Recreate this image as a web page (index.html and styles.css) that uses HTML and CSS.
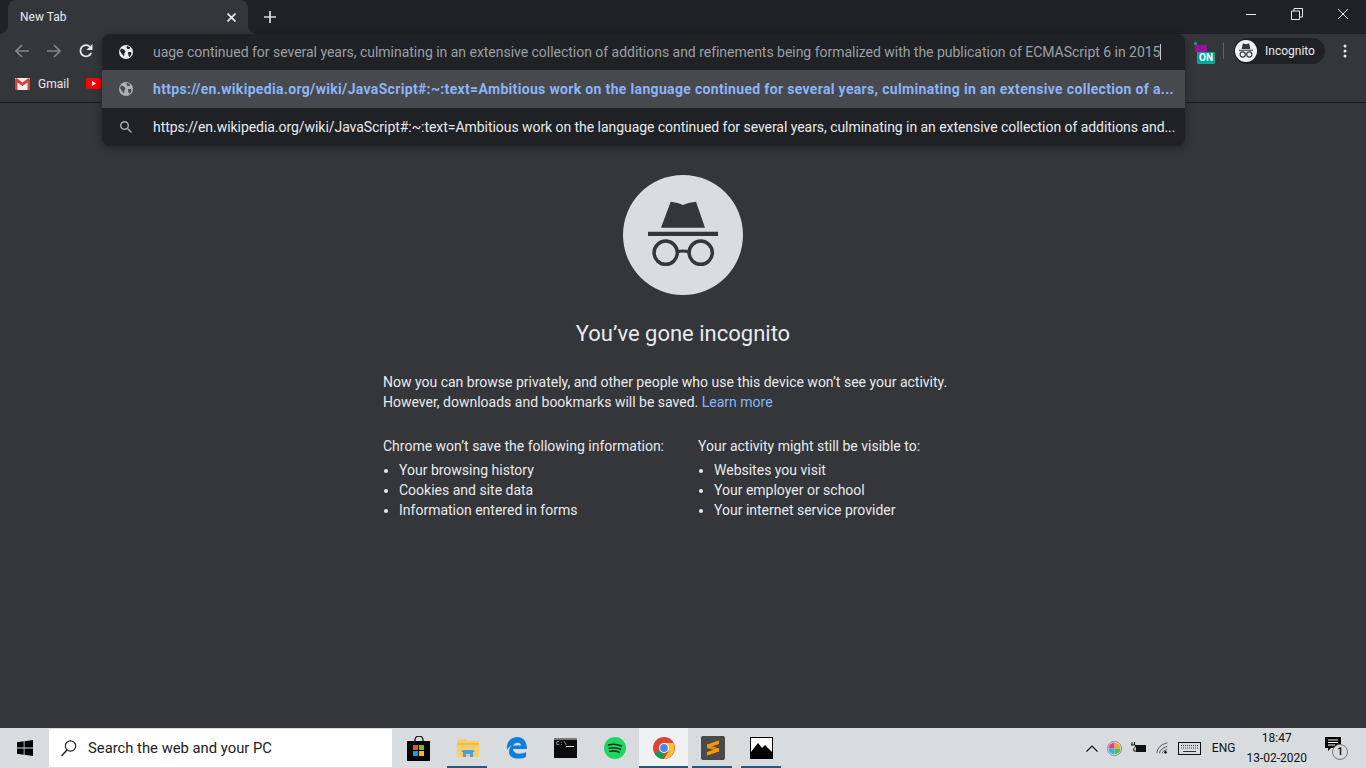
FILE: index.html
```html
<!DOCTYPE html>
<html lang="en">
<head>
  <meta charset="UTF-8" />
  <title>New Tab</title>
  <link rel="stylesheet" href="styles.css">
</head>
<body>
<div class="window">

  <div class="tabstrip">
    <div class="tab">
      <span class="tab-title">New Tab</span>
      <svg class="tab-close" width="9" height="9" viewBox="0 0 9 9"><path d="M.5.5l8 8M8.500.5l-8 8" stroke="#e8eaed" stroke-width="1.700"/></svg>
    </div>
    <svg class="new-tab" width="14" height="14" viewBox="0 0 14 14"><path d="M7 1v12M1 7h12" stroke="#dadce0" stroke-width="1.700"/></svg>
    <div class="win-controls">
      <svg width="12" height="12" viewBox="0 0 12 12"><path d="M1 6.500h10" stroke="#e8eaed"/></svg>
      <svg width="12" height="12" viewBox="0 0 12 12"><path d="M.5 3h8v8.500h-8zM3 3V.5h8.500V9H8.500" fill="none" stroke="#e8eaed"/></svg>
      <svg width="12" height="12" viewBox="0 0 12 12"><path d="M1 1l10 10M11 1L1 11" stroke="#e8eaed"/></svg>
    </div>
  </div>

  <div class="toolbar">
    <div class="nav-buttons">
      <svg width="16" height="16" viewBox="0 0 16 16"><path d="M15 8H2M8 2L2 8l6 6" fill="none" stroke="#80868b" stroke-width="1.700"/></svg>
      <svg width="16" height="16" viewBox="0 0 16 16"><path d="M1 8h13M8 2l6 6-6 6" fill="none" stroke="#80868b" stroke-width="1.700"/></svg>
      <svg width="16" height="16" viewBox="0 0 16 16"><path d="M13.200 9.800A5.600 5.600 0 1 1 12 3.800" fill="none" stroke="#e8eaed" stroke-width="1.800"/><path d="M14.500 1v6h-6z" fill="#e8eaed"/></svg>
    </div>
    <div class="toolbar-right">
      <div class="ext-on">
        <span class="ext-dot"></span>
        <span class="ext-flag"></span>
        <span class="ext-badge">ON</span>
      </div>
      <span class="toolbar-sep"></span>
      <div class="profile-pill">
        <span class="profile-avatar">
          <svg width="20" height="20" viewBox="0 0 20 20"><path d="M6.800 2.500l1.500.3 1.700.4 1.700-.4 1.500-.3L14.300 8H5.700zM3 8.800h14v1H3z" fill="#35363a"/><circle cx="6.700" cy="13.500" r="2.600" fill="none" stroke="#35363a" stroke-width="1.100"/><circle cx="13.300" cy="13.500" r="2.600" fill="none" stroke="#35363a" stroke-width="1.100"/><path d="M9.300 13.200h1.400" stroke="#35363a"/></svg>
        </span>
        <span class="profile-name">Incognito</span>
      </div>
      <svg class="menu-dots" width="4" height="14" viewBox="0 0 4 14"><circle cx="2" cy="2" r="1.500" fill="#e8eaed"/><circle cx="2" cy="7" r="1.500" fill="#e8eaed"/><circle cx="2" cy="12" r="1.500" fill="#e8eaed"/></svg>
    </div>
  </div>

  <div class="bookmarks">
    <div class="bookmark">
      <svg width="15" height="12" viewBox="0 0 15 12"><rect width="15" height="12" rx="1" fill="#f1f1f1"/><path d="M0 1.500V12h2.500V4.500L7.500 8l5-3.500V12H15V1.500L13.500 0 7.500 4.500 1.500 0z" fill="#d9423a"/></svg>
      <span>Gmail</span>
    </div>
    <svg class="yt-icon" width="15" height="11" viewBox="0 0 15 11"><rect width="15" height="11" rx="2.500" fill="#f00"/><path d="M6 3l4 2.500L6 8z" fill="#fff"/></svg>
  </div>

  <div class="omnibox">
    <div class="omni-row first">
      <svg class="omni-icon" width="14" height="14" viewBox="0 0 14 14"><circle cx="7" cy="7" r="7" fill="#e8eaed"/><path d="M2 3.500l3 1 1.500 2-1 1.500L5 11.500 3 9 1 6zM8 1l3 1-.5 2H8.500L7.500 2.500zM9 7h3l.5 2-2 3-1-1.500z" fill="#202124"/></svg>
      <span class="omni-input">uage continued for several years, culminating in an extensive collection of additions and refinements being formalized with the publication of ECMAScript 6 in 2015</span>
      <span class="caret"></span>
    </div>
    <div class="omni-row selected">
      <svg class="omni-icon" width="14" height="14" viewBox="0 0 14 14"><circle cx="7" cy="7" r="7" fill="#aeb0b3"/><path d="M2 3.500l3 1 1.500 2-1 1.500L5 11.500 3 9 1 6zM8 1l3 1-.5 2H8.500L7.500 2.500zM9 7h3l.5 2-2 3-1-1.500z" fill="#48494c"/></svg>
      <span class="omni-link">https://en.wikipedia.org/wiki/JavaScript#:~:text=Ambitious work on the language continued for several years, culminating in an extensive collection of a...</span>
    </div>
    <div class="omni-row">
      <svg class="omni-icon" width="14" height="14" viewBox="0 0 14 14"><circle cx="5.500" cy="5.500" r="3.800" fill="none" stroke="#aeb0b3" stroke-width="1.400"/><path d="M8.500 8.500l4 4" stroke="#aeb0b3" stroke-width="1.500"/></svg>
      <span class="omni-text">https://en.wikipedia.org/wiki/JavaScript#:~:text=Ambitious work on the language continued for several years, culminating in an extensive collection of additions and...</span>
    </div>
  </div>

  <main class="ntp">
    <div class="ntp-circle">
      <svg width="120" height="120" viewBox="0 0 120 120"><path d="M47.700 26.700l7 1.300 5.300 2 5.300-2 7.700-1.300L82 52.700H38zM25 56.700h70V61H25z" fill="#35363a"/><circle cx="42.700" cy="77.700" r="11.600" fill="none" stroke="#35363a" stroke-width="3.500"/><circle cx="77.700" cy="77.700" r="11.600" fill="none" stroke="#35363a" stroke-width="3.500"/><path d="M54 77q6-2 12 0" fill="none" stroke="#35363a" stroke-width="3"/></svg>
    </div>
    <h1 class="ntp-title">You’ve gone incognito</h1>
    <div class="ntp-content">
      <p class="ntp-intro">Now you can browse privately, and other people who use this device won’t see your activity.<br>However, downloads and bookmarks will be saved. <a href="#">Learn more</a></p>
      <div class="ntp-columns">
        <div class="ntp-col">
          <h2>Chrome won’t save the following information:</h2>
          <ul>
            <li>Your browsing history</li>
            <li>Cookies and site data</li>
            <li>Information entered in forms</li>
          </ul>
        </div>
        <div class="ntp-col">
          <h2>Your activity might still be visible to:</h2>
          <ul>
            <li>Websites you visit</li>
            <li>Your employer or school</li>
            <li>Your internet service provider</li>
          </ul>
        </div>
      </div>
    </div>
  </main>

  <footer class="taskbar">
    <div class="start">
      <svg width="16" height="16" viewBox="0 0 16 16"><path d="M0 2.300l6.700-1v6.300H0zM7.500 1.200L16 0v7.600H7.500zM0 8.400h6.700v6.300l-6.700-1zM7.500 8.400H16V16l-8.500-1.200z" fill="#000"/></svg>
    </div>
    <div class="task-search">
      <svg width="18" height="18" viewBox="0 0 18 18"><circle cx="10.500" cy="7" r="5.200" fill="none" stroke="#222" stroke-width="1.200"/><path d="M7 11L1.500 17" stroke="#222" stroke-width="1.400"/></svg>
      <span>Search the web and your PC</span>
    </div>
    <div class="task-apps">
      <div class="task-app">
        <svg width="24" height="25" viewBox="0 0 24 25"><path d="M8 6V4a4 4 0 0 1 8 0v2" fill="none" stroke="#111" stroke-width="1.300"/><rect y="5" width="23" height="20" fill="#000"/><rect x="6" y="9" width="5" height="5" fill="#f25022"/><rect x="12" y="9" width="5" height="5" fill="#7fba00"/><rect x="6" y="15" width="5" height="5" fill="#00a4ef"/><rect x="12" y="15" width="5" height="5" fill="#ffb900"/></svg>
      </div>
      <div class="task-app running">
        <svg width="22" height="20" viewBox="0 0 22 20"><path d="M0 1h9l2 2h11v16H0z" fill="#f5cf6a"/><path d="M0 5h22v2H0z" fill="#eebc4c"/><path d="M6 12h10l2 2h-2v5h-3v-3H9v3H6v-5H4z" fill="#4a9fe0"/></svg>
      </div>
      <div class="task-app">
        <svg width="21" height="22" viewBox="0 0 21 22"><path d="M1 13C0 5 5 0 11 0c6 0 10 4 10 12H7c0 5 8 6 13 3v5c-7 3-17 2-17-5 0-3 .8-5 3-7-2 1-4 3-5 5zM7 8.500h8C15 5 9 4.500 7 8.500z" fill="#0f7ddb"/></svg>
      </div>
      <div class="task-app">
        <div class="cmd-icon"><span>C:\</span><i></i></div>
      </div>
      <div class="task-app">
        <svg width="22" height="22" viewBox="0 0 22 22"><circle cx="11" cy="11" r="11" fill="#1ed760"/><path d="M4.500 8q6.500-2 13 1M5.200 11.300q5.500-1.500 11.300 1M5.800 14.300q5-1.200 9.500 1" fill="none" stroke="#16301f" stroke-width="1.600" stroke-linecap="round"/></svg>
      </div>
      <div class="task-app active">
        <svg width="22" height="22" viewBox="0 0 22 22"><circle cx="11" cy="11" r="11" fill="#db4437"/><path d="M11 11L1.500 16.500A11 11 0 0 0 11 22z" fill="#0f9d58"/><path d="M11 6h9.400A11 11 0 0 1 11 22l4.800-8.300z" fill="#fbc02d"/><circle cx="11" cy="11" r="5" fill="#fff"/><circle cx="11" cy="11" r="3.900" fill="#4285f4"/></svg>
      </div>
      <div class="task-app running">
        <div class="sublime-icon">
          <svg width="12" height="16" viewBox="0 0 12 16"><path d="M0 4.500l12 4v3.500L0 8z" fill="#e08a00"/><path d="M0 4.500L12 .5V4L0 8zM0 12l12-4v3.500l-12 4z" fill="#ff9800"/></svg>
        </div>
      </div>
      <div class="task-app running">
        <svg width="23" height="22" viewBox="0 0 23 22"><rect x=".5" y=".5" width="22" height="21" fill="#fff" stroke="#000"/><path d="M1 21V15L8 6l4 5 3-3 7 7v6z" fill="#000"/></svg>
      </div>
    </div>
    <div class="tray">
      <svg width="12" height="7" viewBox="0 0 12 7"><path d="M.5 6.500L6 1l5.500 5.500" fill="none" stroke="#111" stroke-width="1.100"/></svg>
      <svg width="15" height="15" viewBox="0 0 16 16"><circle cx="8" cy="8" r="7.500" fill="#fff" stroke="#777"/><path d="M8 1.500A6.500 6.500 0 0 1 14.500 8H8z" fill="#f5a623"/><path d="M14.500 8A6.500 6.500 0 0 1 8 14.500V8z" fill="#4fc04f"/><path d="M8 14.500A6.500 6.500 0 0 1 1.500 8H8z" fill="#2bb6e8"/><path d="M1.500 8A6.500 6.500 0 0 1 8 1.500V8z" fill="#ea3f8c"/></svg>
      <svg width="16" height="12" viewBox="0 0 16 12"><path d="M1 0v3M3.500 0v3M0 3h4.500v2L2.800 6.500V9H5" fill="none" stroke="#111"/><rect x="5" y="3" width="10" height="7" fill="#111"/></svg>
      <svg width="13" height="14" viewBox="0 0 15 14"><path d="M1 13Q1.500 4 13 1M4 13q.5-5 9-8M7 13q.3-2.500 6-4.500" fill="none" stroke="#555" stroke-width="1.100"/><circle cx="11" cy="12" r="1.500" fill="#111"/></svg>
      <svg width="23" height="13" viewBox="0 0 23 13"><rect x=".5" y=".5" width="22" height="12" fill="none" stroke="#111"/><path d="M3 3.500h17M3 6h17" stroke="#333" stroke-dasharray="1 1"/><path d="M5 9.500h13" stroke="#333"/></svg>
      <span class="tray-lang">ENG</span>
      <div class="tray-clock"><span>18:47</span><span>13-02-2020</span></div>
      <div class="notify">
        <svg width="16" height="15" viewBox="0 0 16 15"><path d="M0 0h16v11H6l-3 3v-3H0z" fill="#000"/><path d="M3 3h10M3 5.500h10M3 8h7" stroke="#fff"/></svg>
        <span class="notify-count">1</span>
      </div>
    </div>
  </footer>

</div>
</body>
</html>
```

FILE: styles.css
```css
* {
  box-sizing: border-box;
}

body {
  margin: 0;
  background: #35363a;
  font-family: Roboto, 'Liberation Sans', sans-serif;
  color: #e8eaed;
}

.window {
  position: relative;
  display: flex;
  flex-direction: column;
  width: 1366px;
  height: 768px;
  overflow: hidden;
}

/* tab strip */
.tabstrip {
  display: flex;
  align-items: center;
  height: 34px;
  padding-left: 8px;
  background: #202124;
}

.tab {
  position: relative;
  display: flex;
  align-items: center;
  justify-content: space-between;
  width: 240px;
  height: 34px;
  padding: 0 12px;
  background: #35363a;
  border-radius: 8px 8px 0 0;
  font-size: 12px;
}

/* the little flares at the bottom corners of the tab */
.tab::before,
.tab::after {
  content: '';
  position: absolute;
  bottom: 0;
  width: 8px;
  height: 8px;
}

.tab::before {
  left: -8px;
  background: radial-gradient(circle at 0 0, #202124 7.500px, #35363a 8px);
}

.tab::after {
  right: -8px;
  background: radial-gradient(circle at 100% 0, #202124 7.500px, #35363a 8px);
}

.new-tab {
  margin-left: 15px;
}

.win-controls {
  display: flex;
  gap: 34px;
  margin-left: auto;
  margin-right: 17px;
  margin-bottom: 6px;
}

/* toolbar */
.toolbar {
  display: flex;
  align-items: center;
  justify-content: space-between;
  height: 34px;
  background: #35363a;
}

.nav-buttons {
  display: flex;
  gap: 16px;
  padding-left: 14px;
}

.toolbar-right {
  display: flex;
  align-items: center;
}

.ext-on {
  position: relative;
  width: 24px;
  height: 24px;
  margin-right: 8px;
}

.ext-dot {
  position: absolute;
  left: 3px;
  top: 3px;
  width: 3px;
  height: 3px;
  background: #13a89e;
  border-radius: 50%;
}

.ext-flag {
  position: absolute;
  left: 4px;
  top: 6px;
  width: 12px;
  height: 7px;
  background: #93149a;
}

.ext-badge {
  position: absolute;
  left: 6px;
  top: 13px;
  width: 18px;
  height: 12px;
  background: #00a79d;
  border-radius: 1px;
  font-size: 10px;
  font-weight: 700;
  line-height: 12px;
  text-align: center;
  color: #fff;
}

.toolbar-sep {
  width: 1px;
  height: 16px;
  margin-right: 10px;
  background: #5f6368;
}

.profile-pill {
  display: flex;
  align-items: center;
  width: 91px;
  height: 26px;
  padding-left: 1px;
  background: #202124;
  border-radius: 13px;
  font-size: 12px;
}

.profile-avatar {
  display: flex;
  align-items: center;
  justify-content: center;
  width: 22px;
  height: 22px;
  margin-right: 8px;
  background: #f1f3f4;
  border-radius: 50%;
}

.menu-dots {
  margin: 0 19px 0 18px;
}

/* bookmarks bar */
.bookmarks {
  display: flex;
  align-items: center;
  height: 35px;
  padding: 0 0 3px 15px;
  background: #35363a;
  border-bottom: 1px solid #18191b;
  font-size: 12px;
}

.bookmark {
  display: flex;
  align-items: center;
  gap: 8px;
}

.yt-icon {
  margin-left: 17px;
}

/* omnibox dropdown */
.omnibox {
  position: absolute;
  left: 102px;
  top: 34px;
  width: 1083px;
  height: 112px;
  background: #202124;
  border-radius: 8px;
  box-shadow: 0 2px 8px rgba(0, 0, 0, 0.35);
  overflow: hidden;
  font-size: 14px;
}

.omni-row {
  display: flex;
  align-items: center;
  height: 38px;
  padding-left: 17px;
  white-space: nowrap;
}

.omni-row.first {
  height: 36px;
}

.omni-row.selected {
  background: #48494c;
}

.omni-icon {
  flex: none;
  margin-right: 20px;
}

.omni-input {
  letter-spacing: -0.025px;
  color: #9aa0a6;
}

.caret {
  width: 1px;
  height: 16px;
  background: #c4c7c9;
}

.omni-link {
  font-weight: 700;
  letter-spacing: 0.33px;
  color: #8ab4f8;
}

.omni-text {
  letter-spacing: -0.05px;
}

/* incognito page */
.ntp {
  flex: 1;
  display: flex;
  flex-direction: column;
  align-items: center;
  padding-top: 72px;
}

.ntp-circle {
  width: 120px;
  height: 120px;
  background: #dadce0;
  border-radius: 50%;
}

.ntp-title {
  margin: 25px 0 0;
  font-size: 22px;
  font-weight: 400;
  line-height: 28px;
  color: #e8eaed;
}

.ntp-content {
  width: 600px;
  margin-top: 24px;
  font-size: 14px;
  line-height: 20px;
}

.ntp-intro {
  margin: 0;
}

.ntp-intro a {
  color: #8ab4f8;
  text-decoration: none;
}

.ntp-columns {
  display: flex;
  gap: 34px;
  margin-top: 24px;
}

.ntp-col {
  flex: none;
}

.ntp-col:first-child {
  width: 281px;
}

.ntp-col h2 {
  margin: 0;
  font-size: inherit;
  font-weight: 400;
}

.ntp-col ul {
  margin: 4px 0 0;
  padding-left: 16px;
}

/* taskbar */
.taskbar {
  display: flex;
  align-items: center;
  height: 40px;
  background: #d9dcde;
  color: #111;
}

.start {
  display: flex;
  align-items: center;
  justify-content: center;
  width: 49px;
  height: 40px;
}

.task-search {
  display: flex;
  align-items: center;
  gap: 10px;
  width: 343px;
  height: 38px;
  padding-left: 11px;
  background: #fff;
  font-size: 14.800px;
  color: #222;
}

.task-apps {
  display: flex;
  margin-left: 2px;
}

.task-app {
  position: relative;
  display: flex;
  align-items: center;
  justify-content: center;
  width: 49px;
  height: 40px;
}

.task-app.running::after,
.task-app.active::after {
  content: '';
  position: absolute;
  left: 4px;
  right: 5px;
  bottom: 0;
  height: 2px;
  background: #24597f;
}

.task-app.active {
  background: #f0f1f2;
}

.task-app.active::after {
  left: 0;
  right: 0;
}

.cmd-icon {
  position: relative;
  width: 23px;
  height: 20px;
  background: #0c0c0c;
  border-top: 2px solid #7a7a7a;
  font-family: 'Liberation Mono', monospace;
  font-size: 6px;
  line-height: 8px;
  color: #ddd;
  padding-left: 2px;
}

.cmd-icon i {
  position: absolute;
  left: 12px;
  top: 6px;
  width: 8px;
  height: 1px;
  background: #ddd;
}

.sublime-icon {
  display: flex;
  align-items: center;
  justify-content: center;
  width: 24px;
  height: 24px;
  background: #4a4a4a;
  border-radius: 2px;
}

.tray {
  display: flex;
  align-items: center;
  gap: 9px;
  margin-left: auto;
  padding-right: 17px;
}

.tray-lang {
  margin-left: 2px;
  font-size: 12px;
}

.tray-clock {
  display: flex;
  flex-direction: column;
  align-items: center;
  margin-left: 2px;
  font-size: 12px;
  line-height: 20px;
}

.notify {
  position: relative;
  width: 24px;
  height: 22px;
  margin-left: 9px;
}

.notify-count {
  position: absolute;
  left: 7px;
  top: 7px;
  width: 16px;
  height: 16px;
  background: #d9dcde;
  border: 1px solid #777;
  border-radius: 50%;
  font-size: 10px;
  font-weight: 700;
  line-height: 14px;
  text-align: center;
}
```
